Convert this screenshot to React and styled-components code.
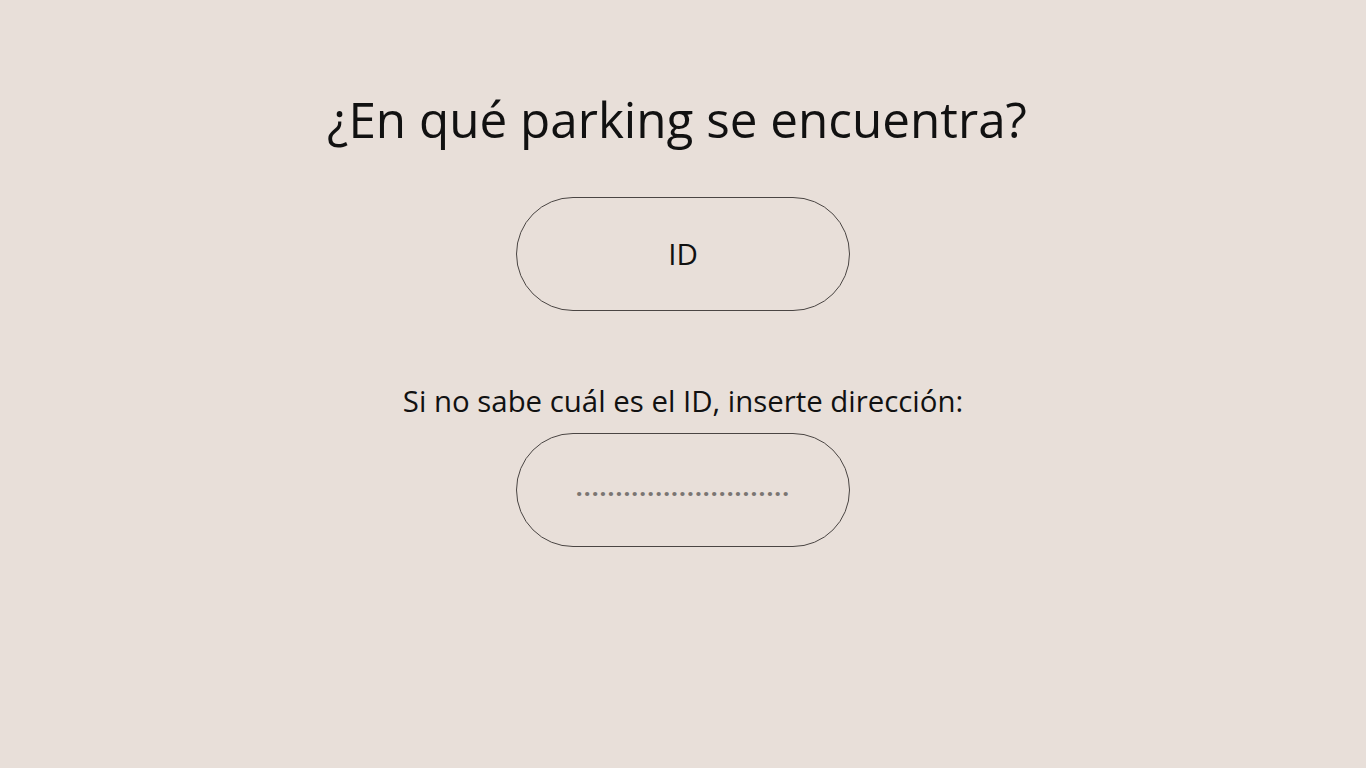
import React from "react";
import styled, { createGlobalStyle } from "styled-components";

const GlobalStyle = createGlobalStyle`
  html, body {
    margin: 0;
    padding: 0;
    background: #e8dfd9;
  }
  body {
    font-family: "Open Sans", "Liberation Sans", sans-serif;
    color: #111;
  }
`;

const Page = styled.div`
  width: 1366px;
  height: 768px;
  display: flex;
  flex-direction: column;
  align-items: center;
  box-sizing: border-box;
  padding-top: 87px;
`;

const Title = styled.h1`
  margin: 0 12px 0 0;
  font-size: 49.4px;
  font-weight: 400;
  line-height: 64px;
  color: #111;
`;

const Pill = styled.div`
  width: 334px;
  height: 114px;
  box-sizing: border-box;
  border: 1px solid #4a4543;
  border-radius: 57px;
  display: flex;
  align-items: center;
  justify-content: center;
  margin-top: ${props => props.top}px;
`;

const PillText = styled.span`
  font-size: 29.5px;
  line-height: 1;
  color: #111;
`;

const Hint = styled.p`
  margin: 72px 0 0 0;
  font-size: 29.4px;
  line-height: 36px;
  color: #111;
`;

const Dots = styled.span`
  font-size: 24px;
  font-weight: 700;
  line-height: 1;
  letter-spacing: 1.1px;
  color: #7a7572;
  margin-top: -6px;
`;

export default function App() {
  return (
    <>
      <GlobalStyle />
      <Page>
        <Title>¿En qué parking se encuentra?</Title>
        <Pill top={46}>
          <PillText>ID</PillText>
        </Pill>
        <Hint>Si no sabe cuál es el ID, inserte dirección:</Hint>
        <Pill top={14}>
          <Dots>...........................</Dots>
        </Pill>
      </Page>
    </>
  );
}
